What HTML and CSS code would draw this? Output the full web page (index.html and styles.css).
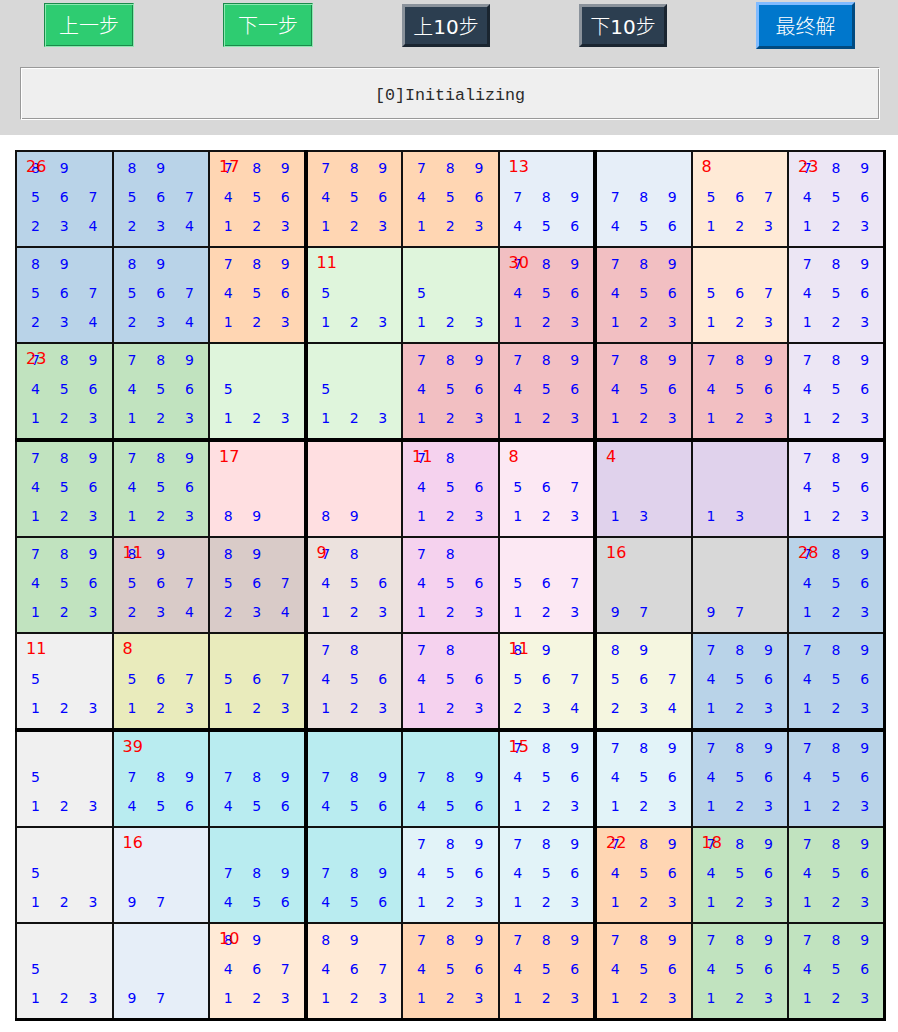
FILE: index.html
```html
<!DOCTYPE html>
<html lang="zh">
<head>
<meta charset="utf-8">
<title>Killer Sudoku</title>
<link rel="stylesheet" href="styles.css">
</head>
<body>
<header class="panel">
<nav class="controls">
<button class="btn step"><span class="han">上一步</span></button>
<button class="btn step"><span class="han">下一步</span></button>
<button class="btn jump"><span class="han">上</span>10<span class="han">步</span></button>
<button class="btn jump"><span class="han">下</span>10<span class="han">步</span></button>
<button class="btn final"><span class="han">最终解</span></button>
</nav>
<div class="status">[0]Initializing</div>
</header>
<table class="board">
<tr>
<td class="blue"><i>26</i><p><b>8</b><b>9</b><b></b><b>5</b><b>6</b><b>7</b><b>2</b><b>3</b><b>4</b></p></td>
<td class="blue"><p><b>8</b><b>9</b><b></b><b>5</b><b>6</b><b>7</b><b>2</b><b>3</b><b>4</b></p></td>
<td class="orange bx"><i>17</i><p><b>7</b><b>8</b><b>9</b><b>4</b><b>5</b><b>6</b><b>1</b><b>2</b><b>3</b></p></td>
<td class="orange"><p><b>7</b><b>8</b><b>9</b><b>4</b><b>5</b><b>6</b><b>1</b><b>2</b><b>3</b></p></td>
<td class="orange"><p><b>7</b><b>8</b><b>9</b><b>4</b><b>5</b><b>6</b><b>1</b><b>2</b><b>3</b></p></td>
<td class="sky bx"><i>13</i><p><b></b><b></b><b></b><b>7</b><b>8</b><b>9</b><b>4</b><b>5</b><b>6</b></p></td>
<td class="sky"><p><b></b><b></b><b></b><b>7</b><b>8</b><b>9</b><b>4</b><b>5</b><b>6</b></p></td>
<td class="peach"><i>8</i><p><b></b><b></b><b></b><b>5</b><b>6</b><b>7</b><b>1</b><b>2</b><b>3</b></p></td>
<td class="lav"><i>23</i><p><b>7</b><b>8</b><b>9</b><b>4</b><b>5</b><b>6</b><b>1</b><b>2</b><b>3</b></p></td>
</tr>
<tr>
<td class="blue"><p><b>8</b><b>9</b><b></b><b>5</b><b>6</b><b>7</b><b>2</b><b>3</b><b>4</b></p></td>
<td class="blue"><p><b>8</b><b>9</b><b></b><b>5</b><b>6</b><b>7</b><b>2</b><b>3</b><b>4</b></p></td>
<td class="orange bx"><p><b>7</b><b>8</b><b>9</b><b>4</b><b>5</b><b>6</b><b>1</b><b>2</b><b>3</b></p></td>
<td class="mint"><i>11</i><p><b></b><b></b><b></b><b>5</b><b></b><b></b><b>1</b><b>2</b><b>3</b></p></td>
<td class="mint"><p><b></b><b></b><b></b><b>5</b><b></b><b></b><b>1</b><b>2</b><b>3</b></p></td>
<td class="rose bx"><i>30</i><p><b>7</b><b>8</b><b>9</b><b>4</b><b>5</b><b>6</b><b>1</b><b>2</b><b>3</b></p></td>
<td class="rose"><p><b>7</b><b>8</b><b>9</b><b>4</b><b>5</b><b>6</b><b>1</b><b>2</b><b>3</b></p></td>
<td class="peach"><p><b></b><b></b><b></b><b>5</b><b>6</b><b>7</b><b>1</b><b>2</b><b>3</b></p></td>
<td class="lav"><p><b>7</b><b>8</b><b>9</b><b>4</b><b>5</b><b>6</b><b>1</b><b>2</b><b>3</b></p></td>
</tr>
<tr class="by">
<td class="green"><i>23</i><p><b>7</b><b>8</b><b>9</b><b>4</b><b>5</b><b>6</b><b>1</b><b>2</b><b>3</b></p></td>
<td class="green"><p><b>7</b><b>8</b><b>9</b><b>4</b><b>5</b><b>6</b><b>1</b><b>2</b><b>3</b></p></td>
<td class="mint bx"><p><b></b><b></b><b></b><b>5</b><b></b><b></b><b>1</b><b>2</b><b>3</b></p></td>
<td class="mint"><p><b></b><b></b><b></b><b>5</b><b></b><b></b><b>1</b><b>2</b><b>3</b></p></td>
<td class="rose"><p><b>7</b><b>8</b><b>9</b><b>4</b><b>5</b><b>6</b><b>1</b><b>2</b><b>3</b></p></td>
<td class="rose bx"><p><b>7</b><b>8</b><b>9</b><b>4</b><b>5</b><b>6</b><b>1</b><b>2</b><b>3</b></p></td>
<td class="rose"><p><b>7</b><b>8</b><b>9</b><b>4</b><b>5</b><b>6</b><b>1</b><b>2</b><b>3</b></p></td>
<td class="rose"><p><b>7</b><b>8</b><b>9</b><b>4</b><b>5</b><b>6</b><b>1</b><b>2</b><b>3</b></p></td>
<td class="lav"><p><b>7</b><b>8</b><b>9</b><b>4</b><b>5</b><b>6</b><b>1</b><b>2</b><b>3</b></p></td>
</tr>
<tr>
<td class="green"><p><b>7</b><b>8</b><b>9</b><b>4</b><b>5</b><b>6</b><b>1</b><b>2</b><b>3</b></p></td>
<td class="green"><p><b>7</b><b>8</b><b>9</b><b>4</b><b>5</b><b>6</b><b>1</b><b>2</b><b>3</b></p></td>
<td class="blush bx"><i>17</i><p><b></b><b></b><b></b><b></b><b></b><b></b><b>8</b><b>9</b></p></td>
<td class="blush"><p><b></b><b></b><b></b><b></b><b></b><b></b><b>8</b><b>9</b></p></td>
<td class="orchid"><i>11</i><p><b>7</b><b>8</b><b></b><b>4</b><b>5</b><b>6</b><b>1</b><b>2</b><b>3</b></p></td>
<td class="petal bx"><i>8</i><p><b></b><b></b><b></b><b>5</b><b>6</b><b>7</b><b>1</b><b>2</b><b>3</b></p></td>
<td class="plum"><i>4</i><p><b></b><b></b><b></b><b></b><b></b><b></b><b>1</b><b>3</b></p></td>
<td class="plum"><p><b></b><b></b><b></b><b></b><b></b><b></b><b>1</b><b>3</b></p></td>
<td class="lav"><p><b>7</b><b>8</b><b>9</b><b>4</b><b>5</b><b>6</b><b>1</b><b>2</b><b>3</b></p></td>
</tr>
<tr>
<td class="green"><p><b>7</b><b>8</b><b>9</b><b>4</b><b>5</b><b>6</b><b>1</b><b>2</b><b>3</b></p></td>
<td class="brown"><i>11</i><p><b>8</b><b>9</b><b></b><b>5</b><b>6</b><b>7</b><b>2</b><b>3</b><b>4</b></p></td>
<td class="brown bx"><p><b>8</b><b>9</b><b></b><b>5</b><b>6</b><b>7</b><b>2</b><b>3</b><b>4</b></p></td>
<td class="taupe"><i>9</i><p><b>7</b><b>8</b><b></b><b>4</b><b>5</b><b>6</b><b>1</b><b>2</b><b>3</b></p></td>
<td class="orchid"><p><b>7</b><b>8</b><b></b><b>4</b><b>5</b><b>6</b><b>1</b><b>2</b><b>3</b></p></td>
<td class="petal bx"><p><b></b><b></b><b></b><b>5</b><b>6</b><b>7</b><b>1</b><b>2</b><b>3</b></p></td>
<td class="gray"><i>16</i><p><b></b><b></b><b></b><b></b><b></b><b></b><b>9</b><b>7</b></p></td>
<td class="gray"><p><b></b><b></b><b></b><b></b><b></b><b></b><b>9</b><b>7</b></p></td>
<td class="blue"><i>28</i><p><b>7</b><b>8</b><b>9</b><b>4</b><b>5</b><b>6</b><b>1</b><b>2</b><b>3</b></p></td>
</tr>
<tr class="by">
<td class="silver"><i>11</i><p><b></b><b></b><b></b><b>5</b><b></b><b></b><b>1</b><b>2</b><b>3</b></p></td>
<td class="khaki"><i>8</i><p><b></b><b></b><b></b><b>5</b><b>6</b><b>7</b><b>1</b><b>2</b><b>3</b></p></td>
<td class="khaki bx"><p><b></b><b></b><b></b><b>5</b><b>6</b><b>7</b><b>1</b><b>2</b><b>3</b></p></td>
<td class="taupe"><p><b>7</b><b>8</b><b></b><b>4</b><b>5</b><b>6</b><b>1</b><b>2</b><b>3</b></p></td>
<td class="orchid"><p><b>7</b><b>8</b><b></b><b>4</b><b>5</b><b>6</b><b>1</b><b>2</b><b>3</b></p></td>
<td class="ivory bx"><i>11</i><p><b>8</b><b>9</b><b></b><b>5</b><b>6</b><b>7</b><b>2</b><b>3</b><b>4</b></p></td>
<td class="ivory"><p><b>8</b><b>9</b><b></b><b>5</b><b>6</b><b>7</b><b>2</b><b>3</b><b>4</b></p></td>
<td class="blue"><p><b>7</b><b>8</b><b>9</b><b>4</b><b>5</b><b>6</b><b>1</b><b>2</b><b>3</b></p></td>
<td class="blue"><p><b>7</b><b>8</b><b>9</b><b>4</b><b>5</b><b>6</b><b>1</b><b>2</b><b>3</b></p></td>
</tr>
<tr>
<td class="silver"><p><b></b><b></b><b></b><b>5</b><b></b><b></b><b>1</b><b>2</b><b>3</b></p></td>
<td class="cyan"><i>39</i><p><b></b><b></b><b></b><b>7</b><b>8</b><b>9</b><b>4</b><b>5</b><b>6</b></p></td>
<td class="cyan bx"><p><b></b><b></b><b></b><b>7</b><b>8</b><b>9</b><b>4</b><b>5</b><b>6</b></p></td>
<td class="cyan"><p><b></b><b></b><b></b><b>7</b><b>8</b><b>9</b><b>4</b><b>5</b><b>6</b></p></td>
<td class="cyan"><p><b></b><b></b><b></b><b>7</b><b>8</b><b>9</b><b>4</b><b>5</b><b>6</b></p></td>
<td class="ice bx"><i>15</i><p><b>7</b><b>8</b><b>9</b><b>4</b><b>5</b><b>6</b><b>1</b><b>2</b><b>3</b></p></td>
<td class="ice"><p><b>7</b><b>8</b><b>9</b><b>4</b><b>5</b><b>6</b><b>1</b><b>2</b><b>3</b></p></td>
<td class="blue"><p><b>7</b><b>8</b><b>9</b><b>4</b><b>5</b><b>6</b><b>1</b><b>2</b><b>3</b></p></td>
<td class="blue"><p><b>7</b><b>8</b><b>9</b><b>4</b><b>5</b><b>6</b><b>1</b><b>2</b><b>3</b></p></td>
</tr>
<tr>
<td class="silver"><p><b></b><b></b><b></b><b>5</b><b></b><b></b><b>1</b><b>2</b><b>3</b></p></td>
<td class="sky"><i>16</i><p><b></b><b></b><b></b><b></b><b></b><b></b><b>9</b><b>7</b></p></td>
<td class="cyan bx"><p><b></b><b></b><b></b><b>7</b><b>8</b><b>9</b><b>4</b><b>5</b><b>6</b></p></td>
<td class="cyan"><p><b></b><b></b><b></b><b>7</b><b>8</b><b>9</b><b>4</b><b>5</b><b>6</b></p></td>
<td class="ice"><p><b>7</b><b>8</b><b>9</b><b>4</b><b>5</b><b>6</b><b>1</b><b>2</b><b>3</b></p></td>
<td class="ice bx"><p><b>7</b><b>8</b><b>9</b><b>4</b><b>5</b><b>6</b><b>1</b><b>2</b><b>3</b></p></td>
<td class="orange"><i>22</i><p><b>7</b><b>8</b><b>9</b><b>4</b><b>5</b><b>6</b><b>1</b><b>2</b><b>3</b></p></td>
<td class="green"><i>18</i><p><b>7</b><b>8</b><b>9</b><b>4</b><b>5</b><b>6</b><b>1</b><b>2</b><b>3</b></p></td>
<td class="green"><p><b>7</b><b>8</b><b>9</b><b>4</b><b>5</b><b>6</b><b>1</b><b>2</b><b>3</b></p></td>
</tr>
<tr>
<td class="silver"><p><b></b><b></b><b></b><b>5</b><b></b><b></b><b>1</b><b>2</b><b>3</b></p></td>
<td class="sky"><p><b></b><b></b><b></b><b></b><b></b><b></b><b>9</b><b>7</b></p></td>
<td class="peach bx"><i>10</i><p><b>8</b><b>9</b><b></b><b>4</b><b>6</b><b>7</b><b>1</b><b>2</b><b>3</b></p></td>
<td class="peach"><p><b>8</b><b>9</b><b></b><b>4</b><b>6</b><b>7</b><b>1</b><b>2</b><b>3</b></p></td>
<td class="orange"><p><b>7</b><b>8</b><b>9</b><b>4</b><b>5</b><b>6</b><b>1</b><b>2</b><b>3</b></p></td>
<td class="orange bx"><p><b>7</b><b>8</b><b>9</b><b>4</b><b>5</b><b>6</b><b>1</b><b>2</b><b>3</b></p></td>
<td class="orange"><p><b>7</b><b>8</b><b>9</b><b>4</b><b>5</b><b>6</b><b>1</b><b>2</b><b>3</b></p></td>
<td class="green"><p><b>7</b><b>8</b><b>9</b><b>4</b><b>5</b><b>6</b><b>1</b><b>2</b><b>3</b></p></td>
<td class="green"><p><b>7</b><b>8</b><b>9</b><b>4</b><b>5</b><b>6</b><b>1</b><b>2</b><b>3</b></p></td>
</tr>
</table>
</body>
</html>
```

FILE: styles.css
```css
* { box-sizing: border-box; }
html, body { margin: 0; padding: 0; background: #fff; }
body { font-family: "DejaVu Sans", sans-serif; }

.panel { background: #d8d8d8; height: 135px; padding-top: 2px; }
.controls { display: flex; align-items: flex-start; gap: 89px; height: 48px; padding-left: 44px; }
.btn {
  font-family: "DejaVu Sans", "Noto Sans CJK SC", sans-serif;
  font-size: 20px;
  color: #fff;
  margin: 0;
  padding: 2px 0 0;
  line-height: 24px;
}
.han { font-weight: 300; }
.step {
  width: 90px;
  height: 44px;
  margin-top: 1px;
  background: #2ecc71;
  border: 1px solid;
  border-color: #1a8a4a #8ce8b0 #8ce8b0 #1a8a4a;
  box-shadow: inset 1px 1px 0 #8ce8b0, inset -1px -1px 0 #1a8a4a;
}
.jump { width: 88px; height: 43px; margin-top: 2px; background: #2c3e50; border: 3px solid; border-color: #8a929b #1a2530 #1a2530 #8a929b; }
.final { width: 99px; height: 47px; background: #0077cc; border: 3px solid; border-color: #80bbff #004a80 #004a80 #80bbff; }

.status {
  margin: 17px 18px 0 20px;
  height: 53px;
  background: #efefef;
  border: 1px solid;
  border-color: #999 #fff #fff #999;
  box-shadow: inset 1px 1px 0 #fff, inset -1px -1px 0 #999;
  font-family: "Liberation Mono", monospace;
  font-size: 16.67px;
  color: #2a2a2a;
  display: flex;
  align-items: center;
  justify-content: center;
  padding-top: 4px;
}

.board {
  border-collapse: collapse;
  table-layout: fixed;
  width: 871px;
  height: 871px;
  margin: 15px 0 0 15px;
  border-style: solid;
  border-color: #000;
  border-width: 2px 3px 3px 2px;
}
.board td {
  position: relative;
  padding: 0;
  border: 2px solid #111;
  vertical-align: middle;
}
.board td.bx { border-right: 4px solid #000; }
.board .by td { border-bottom: 4px solid #000; }
.board p {
  margin: 0;
  padding: 0 4px 2px;
  display: grid;
  grid-template-columns: repeat(3, 1fr);
  grid-template-rows: repeat(3, 29px);
  align-items: center;
  justify-items: center;
}
.board b { font-weight: normal; font-size: 14px; color: #0000ff; line-height: 29px; }
.board i { position: absolute; left: 9px; top: 5px; font-style: normal; font-size: 16px; color: #f00; line-height: 19px; }

.blue { background: #b9d3e8; }
.orange { background: #ffd6b3; }
.sky { background: #e6eef8; }
.peach { background: #ffead6; }
.lav { background: #ece6f4; }
.mint { background: #dff5dc; }
.rose { background: #f2bfc2; }
.green { background: #c1e3bf; }
.blush { background: #ffdfe1; }
.orchid { background: #f5d2ee; }
.petal { background: #fce8f3; }
.plum { background: #e0d2ec; }
.brown { background: #d9cbc8; }
.taupe { background: #ece2de; }
.gray { background: #d8d8d8; }
.silver { background: #f0f0f0; }
.khaki { background: #e9ebbc; }
.ivory { background: #f5f6e0; }
.cyan { background: #b9ecf0; }
.ice { background: #e2f3f8; }
```
